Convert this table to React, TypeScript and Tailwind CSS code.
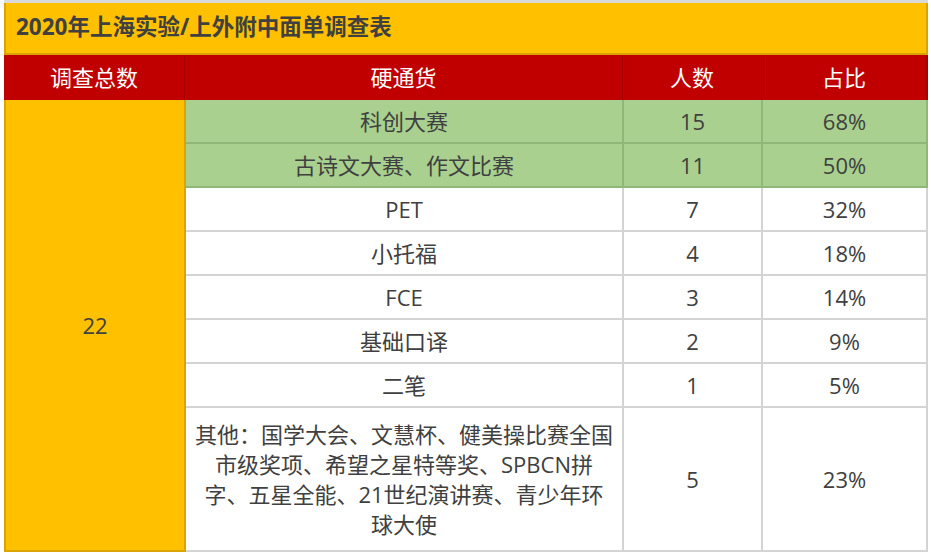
import React from "react"

const rows = [
  { name: "科创大赛", count: "15", pct: "68%", green: true },
  { name: "古诗文大赛、作文比赛", count: "11", pct: "50%", green: true },
  { name: "PET", count: "7", pct: "32%" },
  { name: "小托福", count: "4", pct: "18%" },
  { name: "FCE", count: "3", pct: "14%" },
  { name: "基础口译", count: "2", pct: "9%" },
  { name: "二笔", count: "1", pct: "5%" },
]

const otherLines = [
  "其他：国学大会、文慧杯、健美操比赛全国",
  "市级奖项、希望之星特等奖、SPBCN拼",
  "字、五星全能、21世纪演讲赛、青少年环",
  "球大使",
]

function BodyRow({ name, count, pct, green }: { name: string; count: string; pct: string; green?: boolean }) {
  const cell = green
    ? "flex items-center justify-center bg-[#a9d08e] border-b-2 border-r-2 border-[#8fb878]"
    : "flex items-center justify-center bg-white border-b-2 border-r-2 border-[#d4d4d4]"
  return (
    <div className="flex h-[44px]">
      <div className={`${cell} w-[438px]`}>{name}</div>
      <div className={`${cell} w-[139px]`}>{count}</div>
      <div className={`${cell} w-[165px]`}>{pct}</div>
    </div>
  )
}

export default function App() {
  return (
    <div
      className="w-[931px] h-[556px] bg-white text-[#404040] text-[22px]"
      style={{ fontFamily: '"Open Sans", "Noto Sans CJK SC", sans-serif' }}
    >
      <div className="ml-[4px] w-[924px] border-t-[3px] border-[#dadada]">
        {/* title */}
        <div className="flex h-[52px] items-center bg-[#ffc000] border-x-2 border-b-2 border-[#d9a300] pl-[10px] pb-[2px] font-bold text-[22.5px] text-[#404040]">
          2020年上海实验/上外附中面单调查表
        </div>

        {/* header */}
        <div className="flex h-[45px] bg-[#c00000] text-white text-[22px]">
          <div className="flex w-[181px] items-center justify-center border-r border-[#a80000]">调查总数</div>
          <div className="flex w-[438px] items-center justify-center border-r border-[#a80000]">硬通货</div>
          <div className="flex w-[139px] items-center justify-center border-r border-[#a80000]">人数</div>
          <div className="flex w-[166px] items-center justify-center border-r-2 border-[#a80000]">占比</div>
        </div>

        {/* body */}
        <div className="flex">
          <div className="flex w-[182px] items-center justify-center bg-[#ffc000] border-x-2 border-b-2 border-[#d9a300]">
            22
          </div>
          <div className="flex w-[742px] flex-col">
            {rows.map((r) => (
              <BodyRow key={r.name} {...r} />
            ))}
            <div className="flex h-[144px]">
              <div className="flex w-[438px] flex-col items-center justify-center border-b-2 border-r-2 border-[#d4d4d4] leading-[30px]">
                {otherLines.map((l) => (
                  <span key={l}>{l}</span>
                ))}
              </div>
              <div className="flex w-[139px] items-center justify-center border-b-2 border-r-2 border-[#d4d4d4]">5</div>
              <div className="flex w-[165px] items-center justify-center border-b-2 border-r-2 border-[#d4d4d4]">23%</div>
            </div>
          </div>
        </div>
      </div>
    </div>
  )
}
